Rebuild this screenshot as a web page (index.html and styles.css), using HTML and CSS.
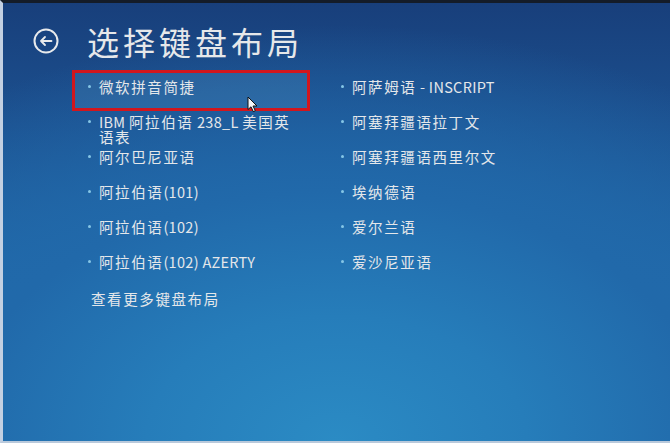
FILE: index.html
```html
<!DOCTYPE html>
<html lang="zh-CN">
<head>
<meta charset="utf-8">
<title>选择键盘布局</title>
<link rel="stylesheet" href="styles.css">
</head>
<body>
<div class="screen">
  <header class="header">
    <svg class="back" width="26" height="26" viewBox="0 0 26 26" aria-hidden="true">
      <circle cx="13" cy="13" r="11.5" fill="none" stroke="#e8eaec" stroke-width="2"/>
      <path d="M8 13 H18.5 M12 9 L8 13 L12 17" fill="none" stroke="#e8eaec" stroke-width="1.8" stroke-linecap="round" stroke-linejoin="round"/>
    </svg>
    <h1 class="title">选择键盘布局</h1>
  </header>
  <ul class="list">
    <li class="item selected"><span class="dot"></span><span class="label">微软拼音简捷</span></li>
    <li class="item"><span class="dot"></span><span class="label"><span class="en">IBM </span>阿拉伯语<span class="en"> 238_L </span>美国英语表</span></li>
    <li class="item"><span class="dot"></span><span class="label">阿尔巴尼亚语</span></li>
    <li class="item"><span class="dot"></span><span class="label">阿拉伯语<span class="en">(101)</span></span></li>
    <li class="item"><span class="dot"></span><span class="label">阿拉伯语<span class="en">(102)</span></span></li>
    <li class="item"><span class="dot"></span><span class="label">阿拉伯语<span class="en">(102) AZERTY</span></span></li>
    <li class="item"><span class="dot"></span><span class="label">阿萨姆语<span class="en"> - INSCRIPT</span></span></li>
    <li class="item"><span class="dot"></span><span class="label">阿塞拜疆语拉丁文</span></li>
    <li class="item"><span class="dot"></span><span class="label">阿塞拜疆语西里尔文</span></li>
    <li class="item"><span class="dot"></span><span class="label">埃纳德语</span></li>
    <li class="item"><span class="dot"></span><span class="label">爱尔兰语</span></li>
    <li class="item"><span class="dot"></span><span class="label">爱沙尼亚语</span></li>
  </ul>
  <div class="more">查看更多键盘布局</div>
  <svg class="cursor" width="12" height="17" viewBox="0 0 12 17" aria-hidden="true">
    <path d="M1 1 L1 13.5 L4 10.8 L6.3 15.6 L8.3 14.7 L6 10 L10 10 Z" fill="#f4f6f8" stroke="#111" stroke-width="1" stroke-linejoin="round"/>
  </svg>
</div>
</body>
</html>
```
FILE: styles.css
```css
html, body {
  margin: 0;
  padding: 0;
  background: #1f62a2;
}

.screen {
  position: relative;
  width: 670px;
  height: 443px;
  box-sizing: border-box;
  border-left: 3px solid #c3d0e2;
  border-top: 3px solid #141c28;
  border-bottom: 2px solid #b9c9db;
  padding: 22px 0 0 30px;
  overflow: hidden;
  color: #e4e7ea;
  font-family: "Noto Sans CJK SC", "Noto Sans", sans-serif;
  background:
    radial-gradient(ellipse 95% 95% at 50% 100%, #2b8bc4 0%, #267dba 30%, #2169aa 60%, rgba(30, 90, 155, 0) 100%),
    linear-gradient(180deg, #183f7b 0%, #1c5190 28%, #2067a7 60%, #2479b6 100%);
}

.header {
  display: flex;
  align-items: center;
  height: 32px;
}

.back {
  display: block;
  flex: none;
  margin-right: 28px;
}

.title {
  margin: 0;
  font-size: 32px;
  line-height: 32px;
  font-weight: 400;
  letter-spacing: 4px;
  color: #e6e8ea;
  white-space: nowrap;
}

.list {
  list-style: none;
  margin: 16px 0 0 42px;
  padding: 0;
  display: grid;
  grid-template-columns: 232px 232px;
  grid-template-rows: repeat(6, 35px);
  grid-auto-flow: column;
  column-gap: 21px;
}

.item {
  display: flex;
  align-items: flex-start;
  box-sizing: border-box;
  height: 35px;
  padding: 6px 4px 0 13px;
  font-size: 14.5px;
  line-height: 15px;
  letter-spacing: 1.6px;
  color: #e4e7ea;
}

.item.selected {
  background: rgba(120, 190, 230, 0.16);
  outline: 3px solid #d2161d;
  outline-offset: 0;
}

.dot {
  flex: none;
  width: 3px;
  height: 3px;
  margin: 6px 8px 0 0;
  border-radius: 50%;
  background: #86c6e6;
}

.label {
  display: block;
}

.en {
  letter-spacing: 0.3px;
}

.more {
  margin: 9px 0 0 58px;
  font-size: 14.5px;
  line-height: 14px;
  letter-spacing: 1.6px;
  color: #e4e7ea;
}

.cursor {
  position: absolute;
  left: 244px;
  top: 93px;
}
```
